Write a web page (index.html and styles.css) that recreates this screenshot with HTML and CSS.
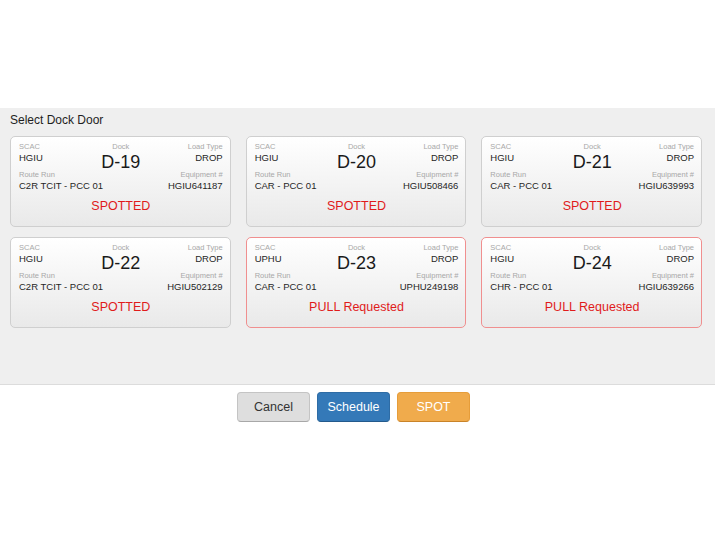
FILE: index.html
```html
<!DOCTYPE html>
<html>
<head>
<meta charset="utf-8">
<link rel="stylesheet" href="styles.css">
</head>
<body>
<div class="page">
  <div class="spacer"></div>
  <section class="panel">
    <h2 class="title">Select Dock Door</h2>
    <div class="grid">
      <div class="card">
        <div class="top">
          <div class="col left"><div class="lbl">SCAC</div><div class="val">HGIU</div><div class="lbl mt">Route Run</div><div class="val">C2R TCIT - PCC 01</div></div>
          <div class="col mid"><div class="lbl">Dock</div><div class="dock">D-19</div></div>
          <div class="col right"><div class="lbl">Load Type</div><div class="val">DROP</div><div class="lbl mt">Equipment #</div><div class="val">HGIU641187</div></div>
        </div>
        <div class="status">SPOTTED</div>
      </div>
      <div class="card">
        <div class="top">
          <div class="col left"><div class="lbl">SCAC</div><div class="val">HGIU</div><div class="lbl mt">Route Run</div><div class="val">CAR - PCC 01</div></div>
          <div class="col mid"><div class="lbl">Dock</div><div class="dock">D-20</div></div>
          <div class="col right"><div class="lbl">Load Type</div><div class="val">DROP</div><div class="lbl mt">Equipment #</div><div class="val">HGIU508466</div></div>
        </div>
        <div class="status">SPOTTED</div>
      </div>
      <div class="card">
        <div class="top">
          <div class="col left"><div class="lbl">SCAC</div><div class="val">HGIU</div><div class="lbl mt">Route Run</div><div class="val">CAR - PCC 01</div></div>
          <div class="col mid"><div class="lbl">Dock</div><div class="dock">D-21</div></div>
          <div class="col right"><div class="lbl">Load Type</div><div class="val">DROP</div><div class="lbl mt">Equipment #</div><div class="val">HGIU639993</div></div>
        </div>
        <div class="status">SPOTTED</div>
      </div>
      <div class="card">
        <div class="top">
          <div class="col left"><div class="lbl">SCAC</div><div class="val">HGIU</div><div class="lbl mt">Route Run</div><div class="val">C2R TCIT - PCC 01</div></div>
          <div class="col mid"><div class="lbl">Dock</div><div class="dock">D-22</div></div>
          <div class="col right"><div class="lbl">Load Type</div><div class="val">DROP</div><div class="lbl mt">Equipment #</div><div class="val">HGIU502129</div></div>
        </div>
        <div class="status">SPOTTED</div>
      </div>
      <div class="card pull">
        <div class="top">
          <div class="col left"><div class="lbl">SCAC</div><div class="val">UPHU</div><div class="lbl mt">Route Run</div><div class="val">CAR - PCC 01</div></div>
          <div class="col mid"><div class="lbl">Dock</div><div class="dock">D-23</div></div>
          <div class="col right"><div class="lbl">Load Type</div><div class="val">DROP</div><div class="lbl mt">Equipment #</div><div class="val">UPHU249198</div></div>
        </div>
        <div class="status">PULL Requested</div>
      </div>
      <div class="card pull">
        <div class="top">
          <div class="col left"><div class="lbl">SCAC</div><div class="val">HGIU</div><div class="lbl mt">Route Run</div><div class="val">CHR - PCC 01</div></div>
          <div class="col mid"><div class="lbl">Dock</div><div class="dock">D-24</div></div>
          <div class="col right"><div class="lbl">Load Type</div><div class="val">DROP</div><div class="lbl mt">Equipment #</div><div class="val">HGIU639266</div></div>
        </div>
        <div class="status">PULL Requested</div>
      </div>
    </div>
  </section>
  <div class="actions">
    <button class="btn btn-cancel">Cancel</button>
    <button class="btn btn-schedule">Schedule</button>
    <button class="btn btn-spot">SPOT</button>
  </div>
</div>
</body>
</html>
```

FILE: styles.css
```css
html, body {
  margin: 0;
  padding: 0;
  background: #ffffff;
  font-family: "Liberation Sans", Arial, Helvetica, sans-serif;
  color: #333333;
}
.page {
  width: 715px;
  height: 535px;
}
.spacer {
  height: 108px;
}
.panel {
  background: #efefef;
  border-bottom: 1px solid #dcdcdc;
  height: 277px;
  box-sizing: border-box;
  padding: 5px 13px 0 10px;
}
.title {
  margin: 0;
  font-size: 12px;
  font-weight: normal;
  line-height: 14px;
  color: #1e1e1e;
  height: 23px;
}
.grid {
  display: grid;
  grid-template-columns: repeat(3, 1fr);
  column-gap: 15px;
  row-gap: 10px;
}
.card {
  border: 1px solid #cfcfcf;
  border-radius: 5px;
  background: linear-gradient(#ffffff, #e9e9e9);
  padding: 5px 7px 12px 8px;
  height: 91px;
  box-sizing: border-box;
}
.card.pull {
  border-color: #f08f8f;
}
.top {
  display: flex;
  justify-content: space-between;
}
.col {
  display: flex;
  flex-direction: column;
}
.left { align-items: flex-start; width: 35%; }
.right { align-items: flex-end; width: 35%; }
.mid { align-items: center; }
.lbl {
  font-size: 7.5px;
  line-height: 10px;
  color: #a8a8a8;
  white-space: nowrap;
}
.lbl.mt { margin-top: 6px; }
.val {
  font-size: 9.5px;
  line-height: 12px;
  color: #262626;
  white-space: nowrap;
}
.dock {
  font-size: 18px;
  line-height: 20px;
  color: #1a1a1a;
}
.status {
  margin-top: 6px;
  text-align: center;
  font-size: 12.5px;
  line-height: 16px;
  color: #e01b1b;
}
.actions {
  display: flex;
  justify-content: center;
  gap: 7px;
  padding-top: 7px;
  padding-right: 8px;
}
.btn {
  width: 73px;
  height: 30px;
  border-radius: 4px;
  font-family: "Liberation Sans", Arial, Helvetica, sans-serif;
  font-size: 12.5px;
  border: 1px solid;
  padding: 0;
}
.btn-cancel {
  background: #dedede;
  border-color: #c4c4c4;
  border-bottom-color: #a8a8a8;
  color: #333333;
}
.btn-schedule {
  background: #3479b8;
  border-color: #2e6ca5;
  border-bottom-color: #235a8c;
  color: #ffffff;
}
.btn-spot {
  background: #f0ab4c;
  border-color: #e69d3a;
  border-bottom-color: #c98328;
  color: #ffffff;
}
```
